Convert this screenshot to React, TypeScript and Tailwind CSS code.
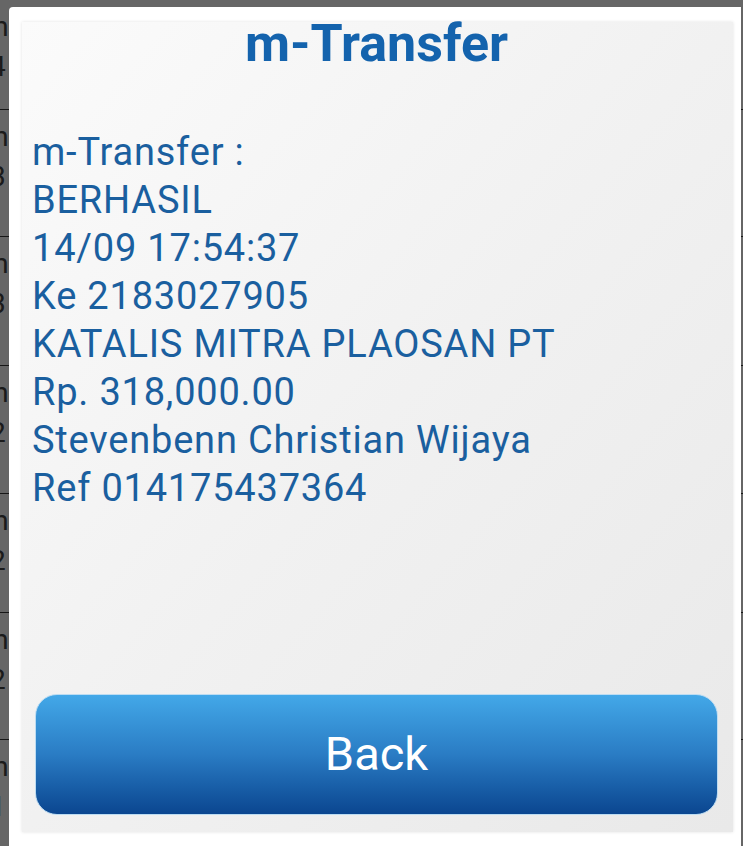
const rows = [
  { h: 110, a: "m", b: "4" },
  { h: 127, a: "m", b: "3" },
  { h: 129, a: "m", b: "3" },
  { h: 128, a: "m", b: "2" },
  { h: 119, a: "m", b: "2" },
  { h: 127, a: "m", b: "2" },
  { h: 130, a: "m", b: "1" },
];

const lines = [
  "m-Transfer :",
  "BERHASIL",
  "14/09 17:54:37",
  "Ke 2183027905",
  "KATALIS MITRA PLAOSAN PT",
  "Rp. 318,000.00",
  "Stevenbenn Christian Wijaya",
  "Ref 014175437364",
];

export default function App() {
  return (
    <div className="relative h-[846px] w-[743px] overflow-hidden bg-white font-['Roboto','Liberation_Sans',sans-serif]">
      {/* list behind the dialog */}
      <div className="flex flex-col">
        {rows.map((r, i) => (
          <div
            key={i}
            className="border-b border-[#3a3a3a] bg-white text-[28px] leading-[40px] text-[#444]"
            style={{ height: r.h }}
          >
            <div className="ml-[-16px] pt-[7px]">{r.a}</div>
            <div className="ml-[-10px]">{r.b}</div>
          </div>
        ))}
      </div>
      <div className="absolute inset-0 bg-black/60" />

      {/* dialog */}
      <div className="absolute left-[9px] top-[7px] right-[2px] bottom-[-10px] rounded-tl-[4px] bg-white pl-[13px] pr-[8px] pt-[15px]">
        <div className="flex h-[810px] flex-col bg-gradient-to-br from-[#fbfbfb] via-[#f1f1f1] to-[#e9e9e9] pl-[13px] pr-[15px] pb-[17px] shadow-[0_0_3px_rgba(0,0,0,0.12)]">
          <h1 className="mt-[-4px] text-center text-[52px] font-bold leading-none text-[#1463ad]">
            m-Transfer
          </h1>
          <div className="mt-[58px] text-[38px] leading-[48px] tracking-[0.8px] text-[#1a5f9f]">
            {lines.map((l) => (
              <div key={l} className="-ml-[3px]">
                {l}
              </div>
            ))}
          </div>
          <div className="flex-1" />
          <button className="h-[121px] w-full rounded-[22px] border border-[#bcdcf2] bg-gradient-to-b from-[#43a8e8] via-[#2a7cc4] to-[#0b4690] text-[47px] text-white">
            Back
          </button>
        </div>
      </div>
    </div>
  );
}
